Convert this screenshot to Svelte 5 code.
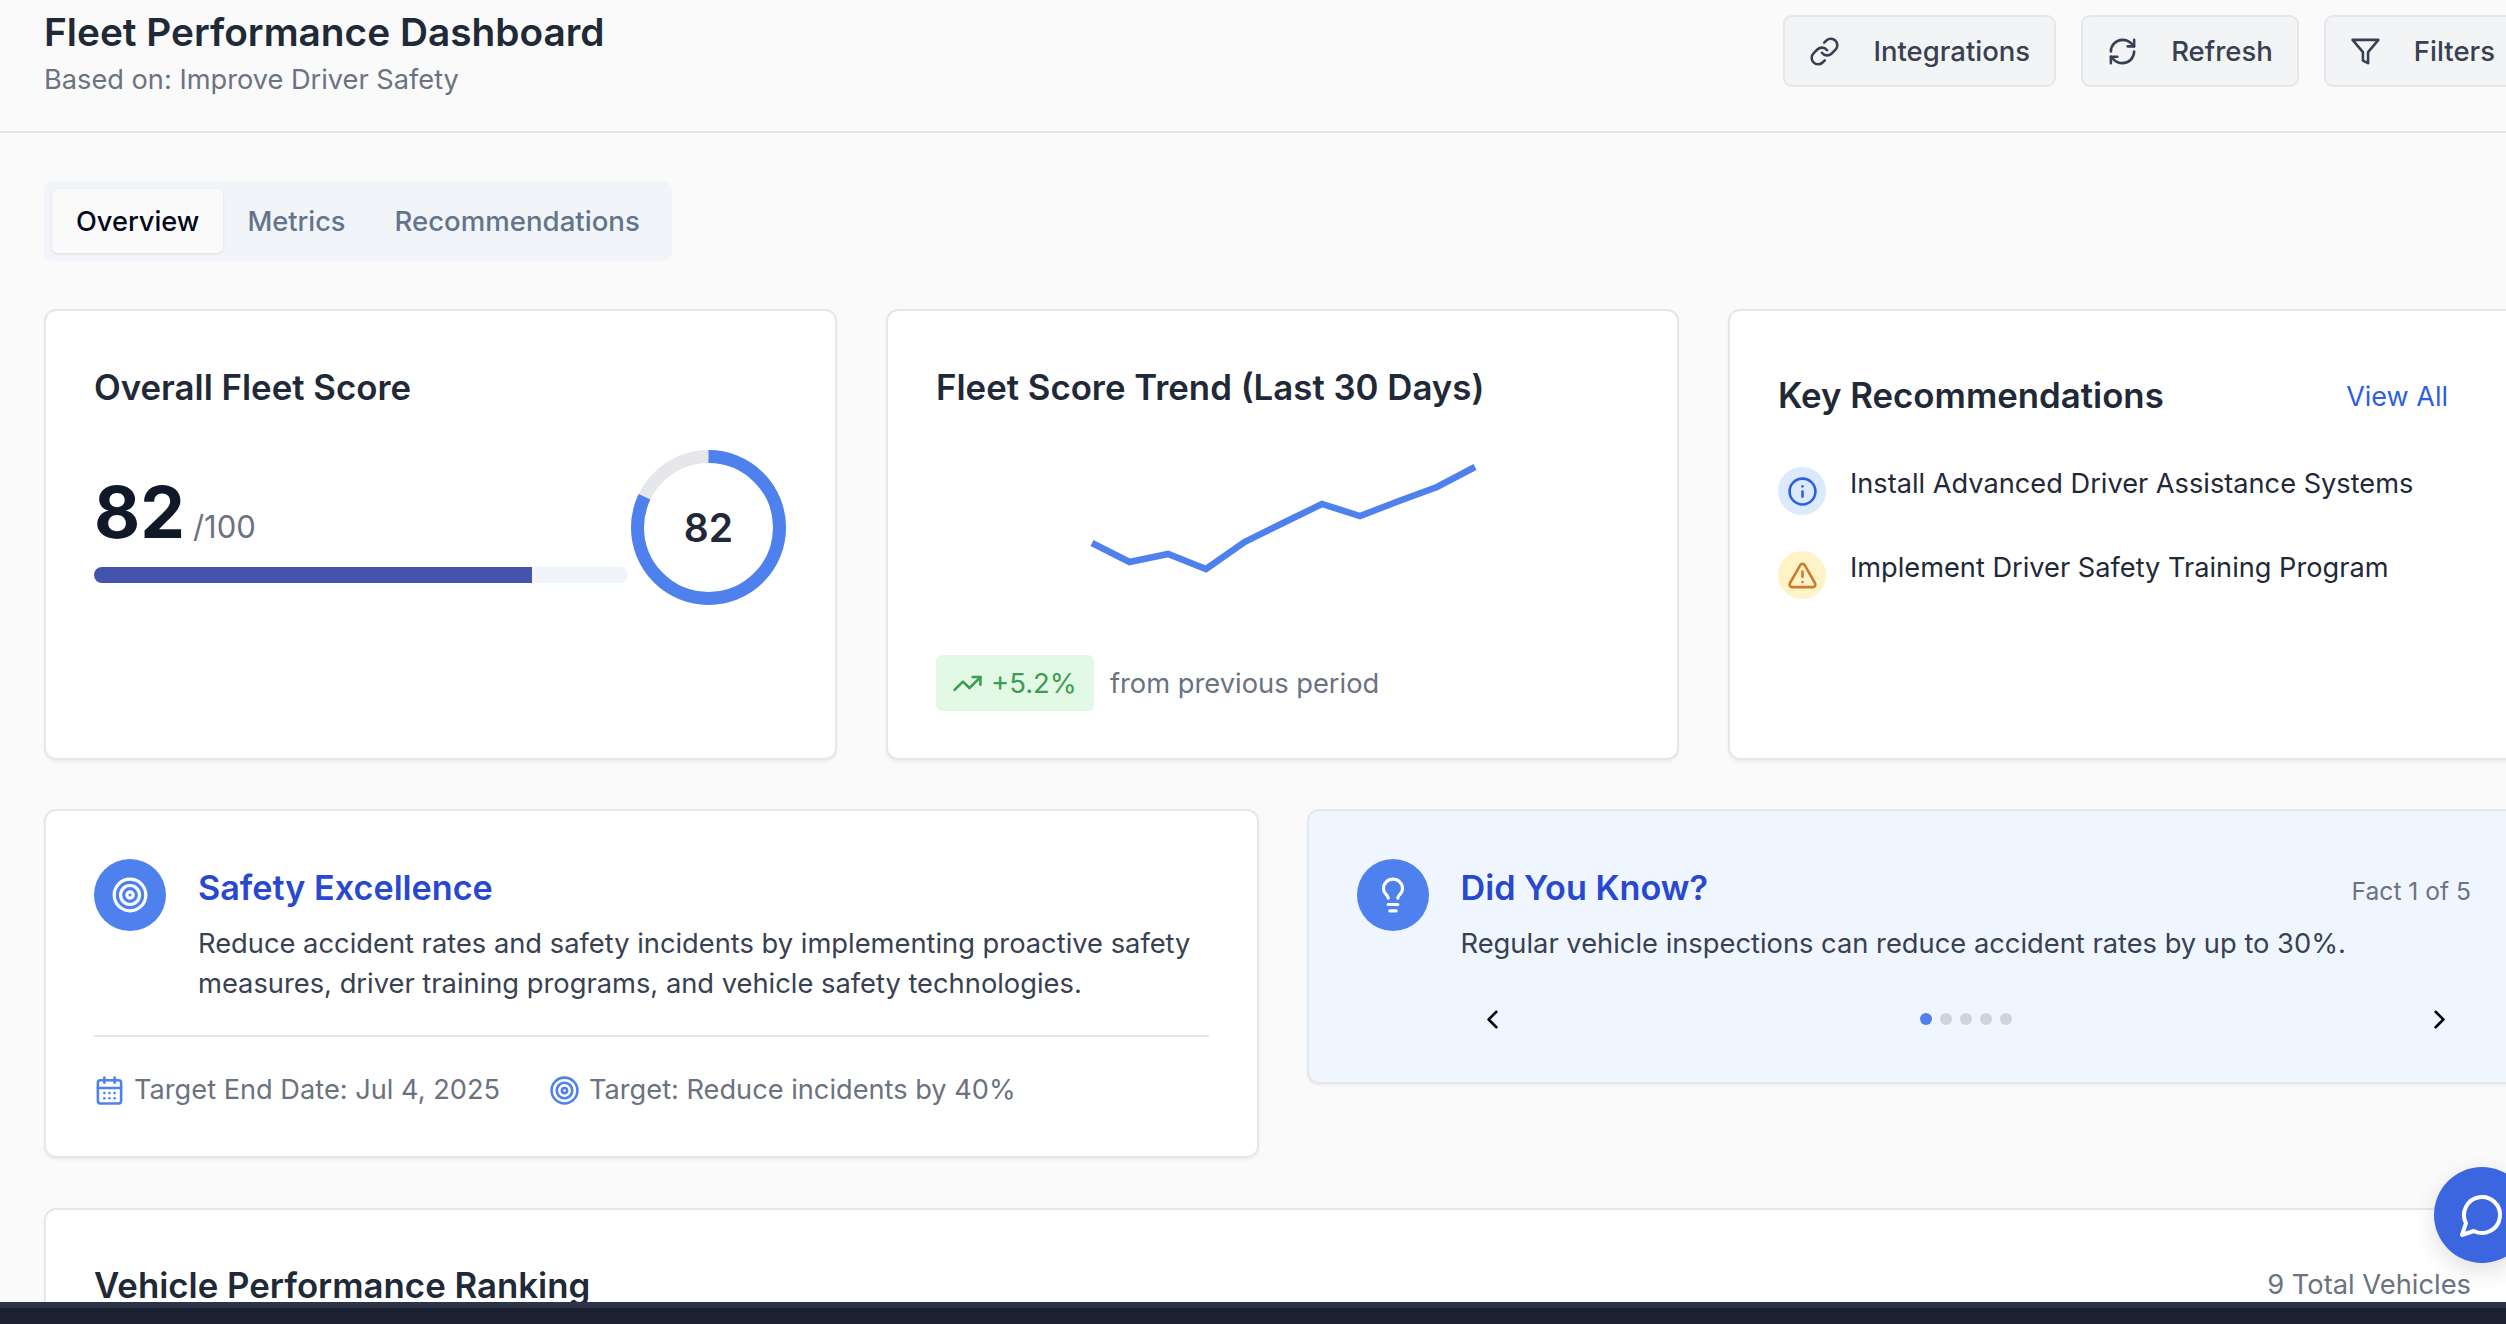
<script>
  const trend = [[156,126],[193.5,145],[232,137],[270,152],[308.5,125],[347,106],[386,87],[424,99],[463,84],[501,70],[539,50]];
  const points = trend.map((p) => p.join(',')).join(' ');
  const score = 82;
  const radius = 71;
  const circ = 2 * Math.PI * radius;
  const dots = [0, 1, 2, 3, 4];
</script>

<div class="page">
  <header class="header">
    <div>
      <h1>Fleet Performance Dashboard</h1>
      <p class="sub">Based on: Improve Driver Safety</p>
    </div>
    <div class="actions">
      <button class="action">
        <svg class="ic" viewBox="0 0 24 24"><path d="M10 13a5 5 0 0 0 7.54.54l3-3a5 5 0 0 0-7.07-7.07l-1.72 1.71"/><path d="M14 11a5 5 0 0 0-7.54-.54l-3 3a5 5 0 0 0 7.07 7.07l1.71-1.71"/></svg>
        Integrations
      </button>
      <button class="action">
        <svg class="ic" viewBox="0 0 24 24"><path d="M3 12a9 9 0 0 1 9-9 9.75 9.75 0 0 1 6.74 2.74L21 8"/><path d="M21 3v5h-5"/><path d="M21 12a9 9 0 0 1-9 9 9.75 9.75 0 0 1-6.74-2.74L3 16"/><path d="M8 16H3v5"/></svg>
        Refresh
      </button>
      <button class="action">
        <svg class="ic" viewBox="0 0 24 24"><polygon points="22 3 2 3 10 12.46 10 19 14 21 14 12.46 22 3"/></svg>
        Filters
      </button>
    </div>
  </header>

  <main class="main">
    <div class="tabs">
      <span class="tab active">Overview</span>
      <span class="tab">Metrics</span>
      <span class="tab wide">Recommendations</span>
    </div>

    <section class="row3">
      <article class="card">
        <h3>Overall Fleet Score</h3>
        <div class="score">
          <div class="score-left">
            <div class="big"><b>82</b><span>/100</span></div>
            <div class="bar"><div class="fill"></div></div>
          </div>
          <div class="donut">
            <svg viewBox="0 0 155 155">
              <circle class="d-bg" cx="77.5" cy="77.5" r={radius}/>
              <circle class="d-fg" cx="77.5" cy="77.5" r={radius} stroke-dasharray="{circ * score / 100} {circ}" transform="rotate(-90 77.5 77.5)"/>
            </svg>
            <span class="d-num">82</span>
          </div>
        </div>
      </article>

      <article class="card">
        <h3>Fleet Score Trend (Last 30 Days)</h3>
        <svg class="chart" viewBox="0 0 692 238"><polyline {points}/></svg>
        <div class="delta">
          <span class="pill">
            <svg class="ic-up" viewBox="0 0 24 24"><polyline points="22 7 13.5 15.5 8.5 10.5 2 17"/><polyline points="16 7 22 7 22 13"/></svg>
            +5.2%
          </span>
          <span class="muted">from previous period</span>
        </div>
      </article>

      <article class="card">
        <div class="rec-head">
          <h3>Key Recommendations</h3>
          <span class="view">View All</span>
        </div>
        <div class="rec">
          <span class="rec-ic info">
            <svg viewBox="0 0 24 24"><circle cx="12" cy="12" r="10"/><path d="M12 16v-4"/><path d="M12 8h.01"/></svg>
          </span>
          <span>Install Advanced Driver Assistance Systems</span>
        </div>
        <div class="rec">
          <span class="rec-ic warn">
            <svg viewBox="0 0 24 24"><path d="m21.73 18-8-14a2 2 0 0 0-3.48 0l-8 14A2 2 0 0 0 4 21h16a2 2 0 0 0 1.73-3Z"/><path d="M12 9v4"/><path d="M12 17h.01"/></svg>
          </span>
          <span>Implement Driver Safety Training Program</span>
        </div>
      </article>
    </section>

    <section class="row2">
      <article class="card goal">
        <div class="feature">
          <span class="round">
            <svg viewBox="0 0 24 24"><circle cx="12" cy="12" r="10"/><circle cx="12" cy="12" r="6"/><circle cx="12" cy="12" r="2"/></svg>
          </span>
          <div class="grow">
            <h2>Safety Excellence</h2>
            <p>Reduce accident rates and safety incidents by implementing proactive safety measures, driver training programs, and vehicle safety technologies.</p>
          </div>
        </div>
        <div class="meta">
          <span class="meta-item">
            <svg viewBox="0 0 24 24"><rect x="3" y="4" width="18" height="18" rx="2"/><path d="M8 2v4"/><path d="M16 2v4"/><path d="M3 10h18"/><path d="M8 14h.01"/><path d="M12 14h.01"/><path d="M16 14h.01"/><path d="M8 18h.01"/><path d="M12 18h.01"/><path d="M16 18h.01"/></svg>
            Target End Date: Jul 4, 2025
          </span>
          <span class="meta-item">
            <svg viewBox="0 0 24 24"><circle cx="12" cy="12" r="10"/><circle cx="12" cy="12" r="6"/><circle cx="12" cy="12" r="2"/></svg>
            Target: Reduce incidents by 40%
          </span>
        </div>
      </article>

      <article class="card fact">
        <div class="feature">
          <span class="round">
            <svg viewBox="0 0 24 24"><path d="M15 14c.2-1 .7-1.7 1.5-2.5 1-.9 1.5-2.2 1.5-3.5A6 6 0 0 0 6 8c0 1 .2 2.2 1.5 3.5.7.7 1.3 1.5 1.5 2.5"/><path d="M9 18h6"/><path d="M10 22h4"/></svg>
          </span>
          <div class="grow">
            <div class="fact-head">
              <h2>Did You Know?</h2>
              <span class="count">Fact 1 of 5</span>
            </div>
            <p>Regular vehicle inspections can reduce accident rates by up to 30%.</p>
            <div class="nav">
              <span class="chev"><svg viewBox="0 0 24 24"><path d="m15 18-6-6 6-6"/></svg></span>
              <div class="dots">
                {#each dots as d}
                  <i class="dot" class:on={d === 0}></i>
                {/each}
              </div>
              <span class="chev"><svg viewBox="0 0 24 24"><path d="m9 18 6-6-6-6"/></svg></span>
            </div>
          </div>
        </div>
      </article>
    </section>

    <article class="card rank">
      <h3>Vehicle Performance Ranking</h3>
      <span class="muted">9 Total Vehicles</span>
    </article>
  </main>

  <div class="chat">
    <svg viewBox="0 0 24 24"><path d="M7.9 20A9 9 0 1 0 4 16.1L2 22Z"/></svg>
  </div>
  <div class="bottom"></div>
</div>

<style>
  :global(body) {
    margin: 0;
    overflow: hidden;
    background: #fafafa;
  }
  .page {
    position: relative;
    width: 2506px;
    height: 1324px;
    overflow: hidden;
    background: #fafafa;
    font-family: Inter, "Liberation Sans", sans-serif;
    font-size: 27.3px;
    color: #374151;
  }
  .header {
    width: 2565px;
    box-sizing: border-box;
    height: 133px;
    padding: 8px 44px 0;
    display: flex;
    justify-content: space-between;
    align-items: flex-start;
    border-bottom: 2px solid #e5e7eb;
  }
  h1 {
    margin: 0;
    font-size: 38.8px;
    line-height: 48px;
    font-weight: 600;
    color: #1f2937;
  }
  .sub {
    margin: 5px 0 0;
    font-size: 27.2px;
    line-height: 38px;
    color: #6b7280;
  }
  .actions {
    display: flex;
    gap: 25px;
    margin-top: 7px;
  }
  .action {
    display: flex;
    align-items: center;
    gap: 33px;
    height: 72px;
    box-sizing: border-box;
    padding: 0 24px;
    border: 2px solid #e5e7eb;
    border-radius: 9px;
    background: #f3f4f6;
    font: 500 27.5px Inter, sans-serif;
    color: #374151;
  }
  .ic {
    width: 31px;
    height: 31px;
    fill: none;
    stroke: #374151;
    stroke-width: 2;
    stroke-linecap: round;
    stroke-linejoin: round;
  }
  .main {
    width: 2565px;
    box-sizing: border-box;
    padding: 48px 44px 0;
  }
  .tabs {
    display: inline-flex;
    box-sizing: border-box;
    height: 80px;
    padding: 8px;
    background: #f1f5f9;
    border-radius: 9px;
    vertical-align: top;
  }
  .tab {
    display: flex;
    align-items: center;
    padding: 0 24px;
    font-size: 27.2px;
    font-weight: 500;
    color: #64748b;
    border-radius: 6px;
  }
  .tab.wide {
    padding-left: 25px;
    font-size: 27.6px;
  }
  .tab.active {
    background: #fafafa;
    color: #020817;
    box-shadow: 0 1px 3px rgba(0, 0, 0, 0.1);
  }
  .row3 {
    margin-top: 48px;
    display: grid;
    grid-template-columns: repeat(3, 1fr);
    gap: 49px;
  }
  .card {
    box-sizing: border-box;
    background: #fff;
    border: 2px solid #e5e7eb;
    border-radius: 12px;
    padding: 48px;
    box-shadow: 0 2px 3px rgba(0, 0, 0, 0.05);
  }
  .row3 .card {
    height: 451px;
  }
  h3 {
    margin: 0 0 2px;
    font-size: 34.8px;
    line-height: 56px;
    font-weight: 600;
    color: #1f2937;
  }
  .score {
    margin-top: 35px;
    padding-right: 1px;
    display: flex;
    gap: 3px;
    align-items: center;
  }
  .score-left {
    flex: 1;
  }
  .big {
    display: flex;
    align-items: baseline;
    gap: 8px;
    height: 95px;
    line-height: 81px;
  }
  .big b {
    font-size: 71px;
    font-weight: 700;
    color: #111827;
  }
  .big span {
    font-size: 31px;
    color: #6b7280;
  }
  .bar {
    height: 16px;
    border-radius: 8px;
    background: #f1f5f9;
    overflow: hidden;
  }
  .fill {
    width: 82%;
    height: 100%;
    background: #4453ad;
  }
  .donut {
    position: relative;
    width: 155px;
    height: 155px;
    flex: none;
  }
  .donut svg {
    display: block;
    width: 155px;
    height: 155px;
    fill: none;
    stroke-width: 13px;
  }
  .d-bg {
    stroke: #e5e7eb;
  }
  .d-fg {
    stroke: #4f81ee;
  }
  .d-num {
    position: absolute;
    inset: 0;
    display: flex;
    align-items: center;
    justify-content: center;
    font-size: 39px;
    font-weight: 600;
    color: #1f2937;
  }
  .chart {
    display: block;
    width: 692px;
    height: 238px;
    fill: none;
    stroke: #4f81ee;
    stroke-width: 6.5px;
  }
  .delta {
    display: flex;
    align-items: center;
    gap: 16px;
  }
  .pill {
    display: flex;
    align-items: center;
    gap: 8px;
    height: 56px;
    padding: 0 17px 0 16px;
    border-radius: 6px;
    background: #e2f9e6;
    color: #3e9c50;
    font-size: 27.5px;
  }
  .ic-up {
    width: 31px;
    height: 31px;
    fill: none;
    stroke: #3e9c50;
    stroke-width: 2;
    stroke-linecap: round;
    stroke-linejoin: round;
  }
  .muted {
    color: #6b7280;
  }
  .rec-head {
    display: flex;
    justify-content: space-between;
    align-items: center;
    height: 74px;
    margin-bottom: 34px;
  }
  .view {
    padding-right: 23px;
    font-size: 27px;
    color: #2f5fe0;
    font-weight: 400;
  }
  .rec {
    display: flex;
    align-items: flex-start;
    gap: 24px;
    height: 48px;
    margin-bottom: 36px;
    font-size: 27.2px;
    line-height: 34px;
    color: #1f2937;
  }
  .rec-ic {
    width: 48px;
    height: 48px;
    border-radius: 50%;
    display: flex;
    align-items: center;
    justify-content: center;
    flex: none;
  }
  .rec-ic svg {
    width: 31px;
    height: 31px;
    fill: none;
    stroke-width: 2;
    stroke-linecap: round;
    stroke-linejoin: round;
  }
  .info {
    background: #dbeafe;
  }
  .info svg {
    stroke: #2f5fe0;
  }
  .warn {
    background: #fef3c7;
  }
  .warn svg {
    stroke: #cc7a2b;
  }
  .row2 {
    margin-top: 49px;
    display: grid;
    grid-template-columns: 1fr 1fr;
    gap: 48px;
    align-items: start;
  }
  .goal {
    height: 349px;
  }
  .fact {
    height: 275px;
    background: #eff6ff;
  }
  .feature {
    display: flex;
    gap: 32px;
  }
  .grow {
    flex: 1;
  }
  .round {
    width: 72px;
    height: 72px;
    flex: none;
    border-radius: 50%;
    background: #4f81ee;
    display: flex;
    align-items: center;
    justify-content: center;
  }
  .round svg {
    width: 38px;
    height: 38px;
    fill: none;
    stroke: #fff;
    stroke-width: 2;
    stroke-linecap: round;
    stroke-linejoin: round;
  }
  h2 {
    margin: 0;
    font-size: 34.2px;
    line-height: 58px;
    font-weight: 600;
    color: #2748cf;
  }
  p {
    margin: 7px 0 0;
    line-height: 40px;
    color: #374151;
  }
  .meta {
    margin-top: 31px;
    padding-top: 33px;
    border-top: 2px solid #e5e7eb;
    display: flex;
    gap: 49px;
    font-size: 27.2px;
    line-height: 40px;
    color: #6b7280;
  }
  .meta-item {
    display: flex;
    align-items: center;
    gap: 9px;
  }
  .meta-item svg {
    width: 31px;
    height: 31px;
    fill: none;
    stroke: #4f81ee;
    stroke-width: 2;
    stroke-linecap: round;
    stroke-linejoin: round;
  }
  .fact-head {
    display: flex;
    justify-content: space-between;
    align-items: baseline;
  }
  .count {
    font-size: 24.6px;
    color: #6b7280;
  }
  .nav {
    margin-top: 41px;
    height: 28px;
    display: flex;
    justify-content: space-between;
    align-items: center;
  }
  .chev {
    width: 64px;
    display: flex;
    justify-content: center;
  }
  .chev svg {
    width: 31px;
    height: 31px;
    fill: none;
    stroke: #020817;
    stroke-width: 2;
    stroke-linecap: round;
    stroke-linejoin: round;
  }
  .dots {
    display: flex;
    gap: 8px;
  }
  .dot {
    width: 12px;
    height: 12px;
    border-radius: 50%;
    background: #d1d5db;
  }
  .dot.on {
    background: #4f81ee;
  }
  .rank {
    margin-top: 50px;
    height: 300px;
    padding-top: 48px;
    display: flex;
    justify-content: space-between;
    align-items: flex-start;
  }
  .rank h3 {
    line-height: 54px;
  }
  .rank .muted {
    line-height: 54px;
  }
  .chat {
    position: absolute;
    left: 2434px;
    top: 1167px;
    width: 96px;
    height: 96px;
    border-radius: 50%;
    background: #3b66e0;
    box-shadow: 0 8px 24px rgba(0, 0, 0, 0.12);
    display: flex;
    align-items: center;
    justify-content: center;
  }
  .chat svg {
    width: 48px;
    height: 48px;
    fill: none;
    stroke: #fff;
    stroke-width: 2;
    stroke-linecap: round;
    stroke-linejoin: round;
  }
  .bottom {
    position: absolute;
    left: 0;
    right: 0;
    bottom: 0;
    height: 16px;
    background: #1b2130;
    border-top: 6px solid #2e3447;
  }
</style>
